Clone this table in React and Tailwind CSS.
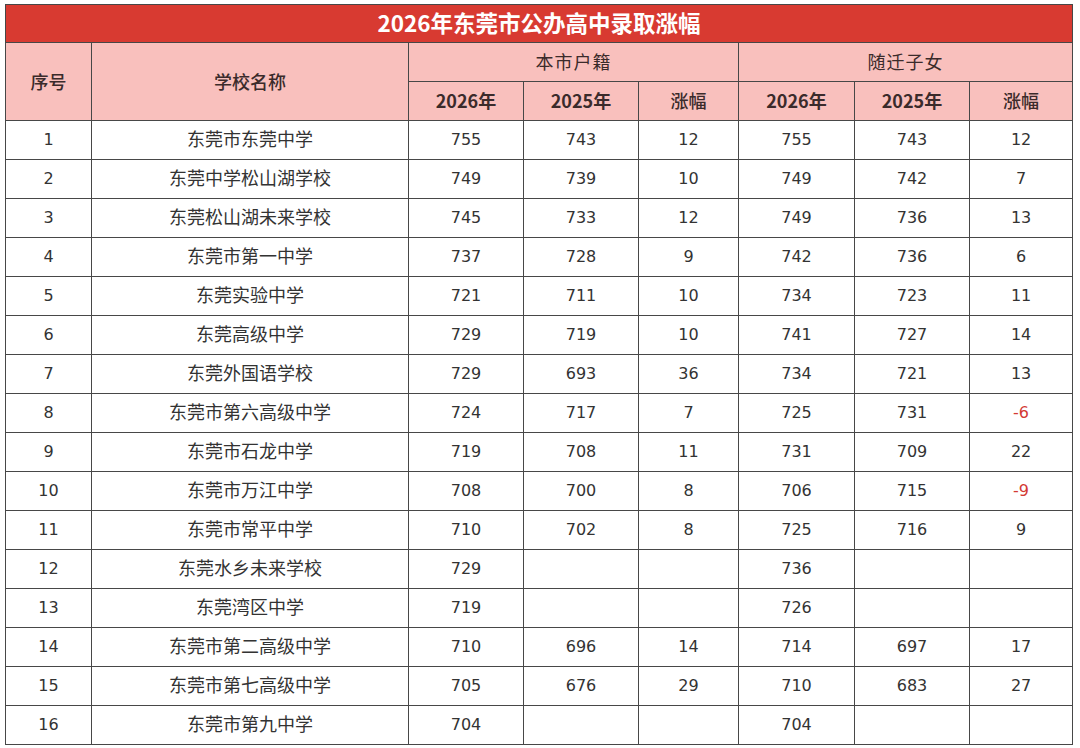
import React from 'react';

const rows = [
  [1, '东莞市东莞中学', 755, 743, 12, 755, 743, 12],
  [2, '东莞中学松山湖学校', 749, 739, 10, 749, 742, 7],
  [3, '东莞松山湖未来学校', 745, 733, 12, 749, 736, 13],
  [4, '东莞市第一中学', 737, 728, 9, 742, 736, 6],
  [5, '东莞实验中学', 721, 711, 10, 734, 723, 11],
  [6, '东莞高级中学', 729, 719, 10, 741, 727, 14],
  [7, '东莞外国语学校', 729, 693, 36, 734, 721, 13],
  [8, '东莞市第六高级中学', 724, 717, 7, 725, 731, -6],
  [9, '东莞市石龙中学', 719, 708, 11, 731, 709, 22],
  [10, '东莞市万江中学', 708, 700, 8, 706, 715, -9],
  [11, '东莞市常平中学', 710, 702, 8, 725, 716, 9],
  [12, '东莞水乡未来学校', 729, '', '', 736, '', ''],
  [13, '东莞湾区中学', 719, '', '', 726, '', ''],
  [14, '东莞市第二高级中学', 710, 696, 14, 714, 697, 17],
  [15, '东莞市第七高级中学', 705, 676, 29, 710, 683, 27],
  [16, '东莞市第九中学', 704, '', '', 704, '', ''],
];

const cjk = "font-['Noto_Sans_CJK_SC',sans-serif]";
const num = "font-['DejaVu_Sans','Noto_Sans_CJK_SC',sans-serif] text-[16px]";
const cell = 'border border-[#474747] text-center align-middle p-0';

const NumCell = ({ value }) => (
  <td className={`${cell} ${num} ${typeof value === 'number' && value < 0 ? 'text-[#d33a34]' : 'text-[#333]'}`}>
    {value}
  </td>
);

export default function App() {
  return (
    <div className="bg-white w-[1080px] h-[748px] pt-[4px] pl-[5px]">
      <table className="border-collapse table-fixed w-[1067px] text-[#333]">
        <colgroup>
          <col className="w-[86px]" />
          <col className="w-[317px]" />
          <col className="w-[115px]" />
          <col className="w-[115px]" />
          <col className="w-[100px]" />
          <col className="w-[116px]" />
          <col className="w-[115px]" />
          <col className="w-[103px]" />
        </colgroup>
        <thead>
          <tr className="h-[38px]">
            <th
              colSpan={8}
              className={`${cell} ${cjk} bg-[#d83a31] text-white text-[22.5px] font-bold leading-none pb-[2px]`}
            >
              2026年东莞市公办高中录取涨幅
            </th>
          </tr>
          <tr className="h-[39px] bg-[#f9c0bd]">
            <th rowSpan={2} className={`${cell} ${cjk} text-[18px] font-medium text-[#3b2b2b]`}>序号</th>
            <th rowSpan={2} className={`${cell} ${cjk} text-[18px] font-medium text-[#3b2b2b]`}>学校名称</th>
            <th colSpan={3} className={`${cell} ${cjk} text-[18px] font-normal tracking-[1px] text-[#3b2b2b] leading-none pb-[3px]`}>本市户籍</th>
            <th colSpan={3} className={`${cell} ${cjk} text-[18px] font-normal tracking-[1px] text-[#3b2b2b] leading-none pb-[3px]`}>随迁子女</th>
          </tr>
          <tr className="h-[39px] bg-[#f9c0bd]">
            {['2026年', '2025年', '涨幅', '2026年', '2025年', '涨幅'].map((h, i) => (
              <th
                key={i}
                className={`${cell} ${cjk} text-[18px] text-[#3b2b2b] leading-none pb-[2px] ${h === '涨幅' ? 'font-medium' : 'font-bold'}`}
              >
                {h}
              </th>
            ))}
          </tr>
        </thead>
        <tbody>
          {rows.map((r) => (
            <tr key={r[0]} className="h-[39px] bg-white">
              <NumCell value={r[0]} />
              <td className={`${cell} ${cjk} text-[18px] text-[#333] leading-none pb-[4px]`}>{r[1]}</td>
              {r.slice(2).map((v, i) => (
                <NumCell key={i} value={v} />
              ))}
            </tr>
          ))}
        </tbody>
      </table>
    </div>
  );
}
